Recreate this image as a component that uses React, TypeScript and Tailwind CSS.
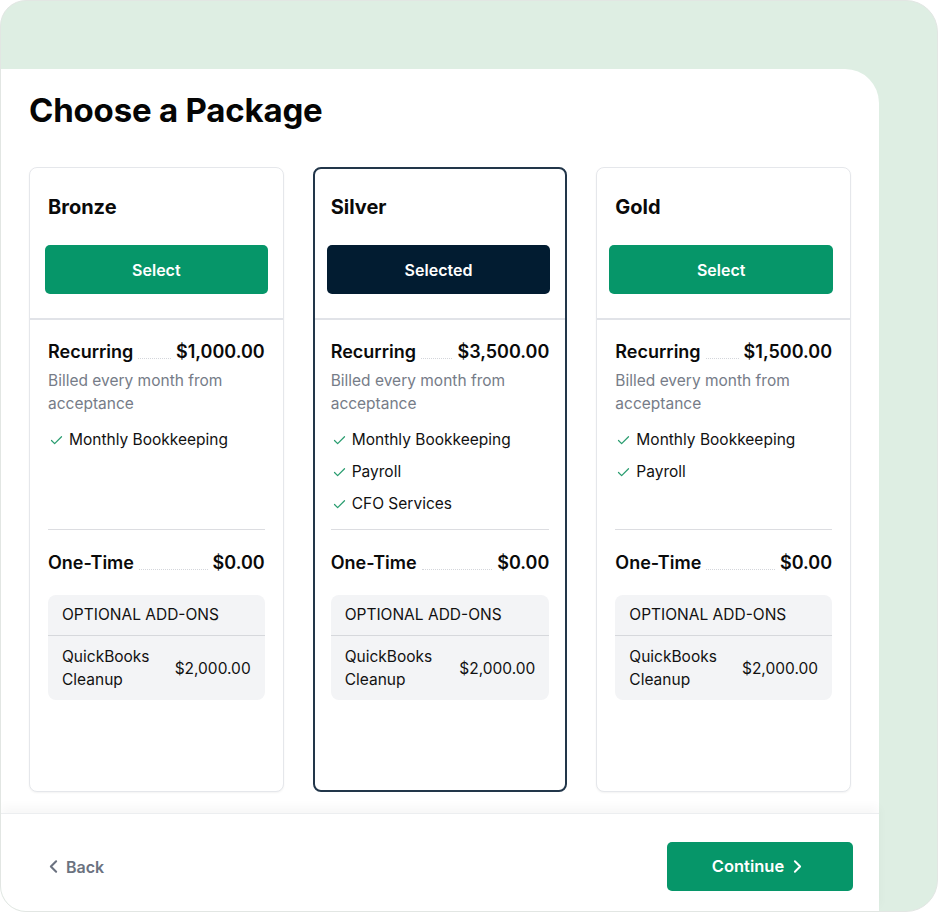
import React from "react";
import { Check, ChevronLeft, ChevronRight } from "lucide-react";

type Pkg = {
  name: string;
  price: string;
  features: string[];
  selected?: boolean;
  headCls: string;
  titleCls: string;
};

const packages: Pkg[] = [
  {
    name: "Bronze",
    price: "$1,000.00",
    features: ["Monthly Bookkeeping"],
    headCls: "border-b-2 border-[#e1e3e8] px-[15px] pb-[24px] pt-[25px]",
    titleCls: "ml-[3px] text-[20px] font-bold leading-[28px] text-[#0a0a0a]",
  },
  {
    name: "Silver",
    price: "$3,500.00",
    features: ["Monthly Bookkeeping", "Payroll", "CFO Services"],
    selected: true,
    headCls: "border-b-2 border-[#e1e3e8] pb-[24px] pl-[12px] pr-[15px] pt-[24px]",
    titleCls: "ml-[4px] text-[20px] font-bold leading-[28px] text-[#0a0a0a]",
  },
  {
    name: "Gold",
    price: "$1,500.00",
    features: ["Monthly Bookkeeping", "Payroll"],
    headCls: "border-b-2 border-[#e1e3e8] pb-[24px] pl-[12px] pr-[17px] pt-[25px]",
    titleCls: "ml-[6px] text-[20px] font-bold leading-[28px] text-[#0a0a0a]",
  },
];

function Card({ p }: { p: Pkg }) {
  return (
    <div
      className={
        p.selected
          ? "flex w-[255px] flex-col rounded-lg border-2 border-[#22364a] bg-white"
          : "flex w-[255px] flex-col rounded-lg border border-[#e5e7eb] bg-white shadow-[0_1px_2px_rgba(0,0,0,0.05)]"
      }
    >
      <div className={p.headCls}>
        <div className={p.titleCls}>{p.name}</div>
        <button
          className={
            p.selected
              ? "mt-[24px] flex h-[49px] w-full items-center justify-center rounded-[5px] bg-[#021c31] text-[16px] font-semibold text-white"
              : "mt-[24px] flex h-[49px] w-full items-center justify-center rounded-[5px] bg-[#069669] text-[16px] font-semibold text-white"
          }
        >
          {p.selected ? "Selected" : "Select"}
        </button>
      </div>
      <div className={p.selected ? "px-[16px] pt-[20px]" : "px-[18px] pt-[20px]"}>
        <div className="flex items-end text-[18px] font-semibold leading-[24px] text-[#0a0a0a]">
          <span>Recurring</span>
          <span className="mx-[5px] mb-[5px] flex-1 border-b border-dotted border-[#d4d6db]" />
          <span>{p.price}</span>
        </div>
        <div className="mt-[5px] text-[15.5px] leading-[23px] text-[#767c88]">
          Billed every month from acceptance
        </div>
        <div className="mt-[13px] flex h-[88px] flex-col gap-[8px]">
          {p.features.map((f) => (
            <div key={f} className="flex items-center text-[15.5px] leading-[24px] text-[#111111]">
              <Check size={15} strokeWidth={2} className="ml-[1px] mr-[5px] text-[#2a9d70]" />
              <span>{f}</span>
            </div>
          ))}
        </div>
        <div className="mt-[13px] h-px bg-[#dcdde1]" />
        <div className="mt-[21px] flex items-end text-[18px] font-semibold leading-[24px] text-[#0a0a0a]">
          <span>One-Time</span>
          <span className="mx-[5px] mb-[5px] flex-1 border-b border-dotted border-[#d4d6db]" />
          <span>$0.00</span>
        </div>
        <div className="mt-[20px] rounded-lg bg-[#f3f4f6]">
          <div className="border-b border-[#d6d8dc] px-[14px] py-[8px] text-[15.5px] leading-[24px] text-[#111111]">
            OPTIONAL ADD-ONS
          </div>
          <div className="flex items-center justify-between px-[14px] pb-[9px] pt-[9px] text-[15.5px] leading-[23px] text-[#111111]">
            <span>
              QuickBooks
              <br />
              Cleanup
            </span>
            <span>$2,000.00</span>
          </div>
        </div>
      </div>
    </div>
  );
}

export default function App() {
  return (
    <div
      className="flex h-[912px] w-[938px] flex-col overflow-hidden rounded-[26px] rounded-r-[32px] border border-[#e2e6e3] bg-[#deeee3] pt-[68px]"
      style={{ fontFamily: "Inter, 'Noto Sans', sans-serif" }}
    >
      <div className="flex w-[878px] flex-1 flex-col rounded-tr-[34px] bg-white">
        <div className="flex-1 px-[28px] pb-[21px] pt-[21px]">
          <h1 className="text-[33px] font-bold leading-[40px] tracking-[-0.2px] text-[#050505]">
            Choose a Package
          </h1>
          <div className="mt-[37px] flex h-[625px] gap-[29px]">
            {packages.map((p) => (
              <Card key={p.name} p={p} />
            ))}
          </div>
        </div>
        <div className="flex h-[99px] items-start justify-between border-t border-[#eceef0] pl-[48px] pr-[26px] pt-[28px] shadow-[0_-6px_10px_rgba(0,0,0,0.035)]">
          <button className="flex h-[49px] items-center gap-[2px] text-[16px] font-semibold text-[#6b7280]">
            <ChevronLeft size={21} strokeWidth={2.4} className="-ml-[6px]" />
            Back
          </button>
          <button className="flex h-[49px] w-[186px] items-center justify-center gap-[3px] rounded-[5px] bg-[#069669] text-[16.5px] font-semibold text-white">
            Continue
            <ChevronRight size={21} strokeWidth={2.2} />
          </button>
        </div>
      </div>
    </div>
  );
}
